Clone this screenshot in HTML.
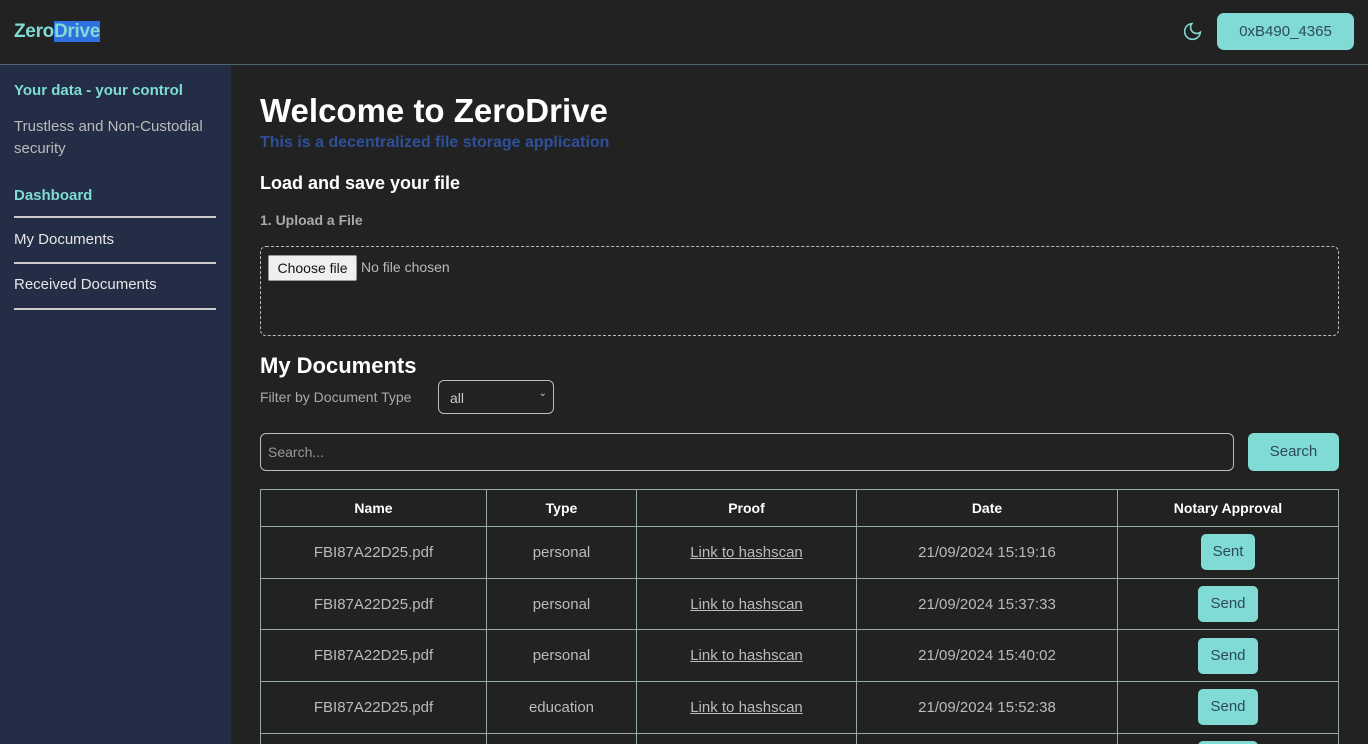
<!DOCTYPE html>
<html style="height:744px;overflow:hidden"><head><style>
*{box-sizing:border-box;margin:0;padding:0}
body{width:1368px;height:744px;overflow:hidden;background:#222;font-family:"Liberation Sans",sans-serif;color:#ddd;position:relative}
.hdr{position:absolute;left:0;top:0;width:1368px;height:65px;background:#222;border-bottom:1px solid #4d6670}
.logo{position:absolute;left:14px;top:20px;font-size:19px;font-weight:bold;color:#7fdbd4;line-height:24px;letter-spacing:-0.3px}
.logo span{background:#2f6fe0}
.acct{position:absolute;left:1217px;top:13px;width:137px;height:37px;background:#7fdbd4;border-radius:7px;color:#2d4a5a;font-size:15px;text-align:center;line-height:37px}
.side{position:absolute;left:0;top:65px;width:231px;height:679px;background:#232d45}
.side div{position:absolute;left:14px}
.nav{width:202px;border-bottom:2px solid #ccc;font-size:15px;color:#e6e6e6}
.main{position:absolute;left:260px}
table{position:absolute;left:260px;top:489px;width:1079px;border-collapse:collapse;font-size:15px}
td,th{border:1px solid #9aa;text-align:center;color:#bbb;font-weight:normal}
th{height:37px;color:#fff;font-weight:bold;font-size:14px}
td{height:51.7px}
td a{color:#bbb;text-decoration:underline}
.b{display:inline-block;background:#7fdbd4;color:#2d4a5a;border-radius:5px;padding:0 12px;line-height:36px}
</style></head><body>
<div class="hdr"><div class="logo">Zero<span>Drive</span></div>
<svg style="position:absolute;left:1182px;top:21px" width="21" height="21" viewBox="0 0 24 24" fill="none" stroke="#7fdbd4" stroke-width="1.8"><path d="M21 12.8A9 9 0 1 1 11.2 3a7 7 0 0 0 9.8 9.8z"/></svg>
<div class="acct">0xB490_4365</div></div>
<div class="side">
<div style="top:17px;font-size:15px;font-weight:bold;color:#7fdbd4">Your data - your control</div>
<div style="top:51px;font-size:15px;color:#bbb;line-height:22px;width:200px">Trustless and Non-Custodial security</div>
<div style="top:122px;font-size:15px;font-weight:bold;color:#7fdbd4;width:202px;border-bottom:2px solid #ccc;height:31px">Dashboard</div>
<div class="nav" style="top:166px;height:33px">My Documents</div>
<div class="nav" style="top:211px;height:34px">Received Documents</div>
</div>
<div class="main" style="top:92px;font-size:33px;font-weight:bold;color:#fff">Welcome to ZeroDrive</div>
<div class="main" style="top:134px;font-size:16px;font-weight:bold;color:#2e4f9a">This is a decentralized file storage application</div>
<div class="main" style="top:173px;font-size:18px;font-weight:bold;color:#fff">Load and save your file</div>
<div class="main" style="top:212px;font-size:14px;color:#aaa;font-weight:bold">1. Upload a File</div>
<div class="main" style="top:246px;width:1079px;height:90px;border:1px dashed #bbb;border-radius:6px"></div>
<div class="main" style="left:268px;top:255px;width:89px;height:26px;background:#efefef;border:1px solid #999;border-radius:2px;color:#111;font-size:14px;text-align:center;line-height:24px">Choose file</div>
<div class="main" style="left:361px;top:259px;font-size:14px;color:#bbb">No file chosen</div>
<div class="main" style="top:353px;font-size:22px;font-weight:bold;color:#fff">My Documents</div>
<div class="main" style="top:389px;font-size:14px;color:#aaa">Filter by Document Type</div>
<div class="main" style="left:438px;top:380px;width:116px;height:34px;border:1px solid #bbb;border-radius:6px;color:#ccc;font-size:14px;padding:9px 11px">all<span style="position:absolute;right:6px;top:7px;font-size:10px">&#8964;</span></div>
<div class="main" style="top:433px;width:974px;height:38px;border:1px solid #bbb;border-radius:6px;color:#999;font-size:14px;padding:10px 7px">Search...</div>
<div class="main" style="left:1248px;top:433px;width:91px;height:38px;background:#7fdbd4;border-radius:6px;color:#2d4a5a;font-size:15px;text-align:center;line-height:38px">Search</div>
<table>
<tr><th style="width:226px">Name</th><th style="width:150px">Type</th><th style="width:220px">Proof</th><th style="width:261px">Date</th><th>Notary Approval</th></tr>
<tr><td>FBI87A22D25.pdf</td><td>personal</td><td><a>Link to hashscan</a></td><td>21/09/2024 15:19:16</td><td><span class="b">Sent</span></td></tr>
<tr><td>FBI87A22D25.pdf</td><td>personal</td><td><a>Link to hashscan</a></td><td>21/09/2024 15:37:33</td><td><span class="b">Send</span></td></tr>
<tr><td>FBI87A22D25.pdf</td><td>personal</td><td><a>Link to hashscan</a></td><td>21/09/2024 15:40:02</td><td><span class="b">Send</span></td></tr>
<tr><td>FBI87A22D25.pdf</td><td>education</td><td><a>Link to hashscan</a></td><td>21/09/2024 15:52:38</td><td><span class="b">Send</span></td></tr>
<tr><td>&nbsp;</td><td></td><td></td><td></td><td><span class="b">Send</span></td></tr>
</table>
</body></html>
